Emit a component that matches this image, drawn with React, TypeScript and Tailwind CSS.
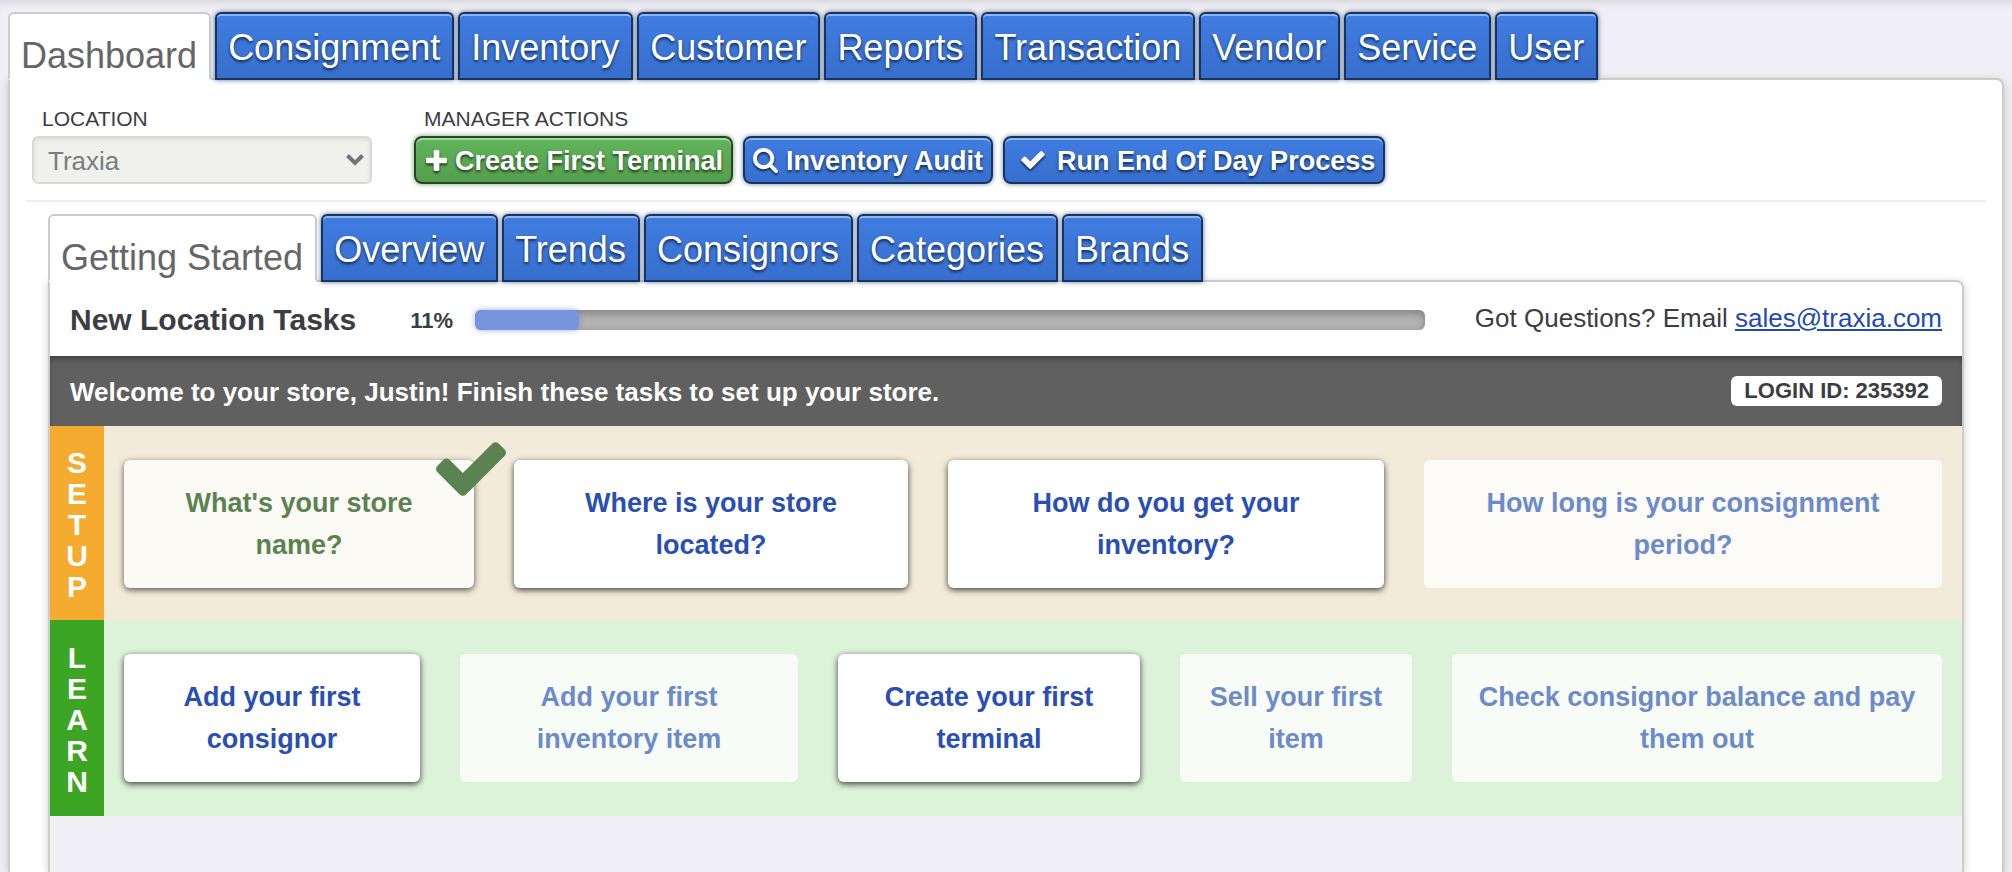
import { useState } from "react";
import clsx from "clsx";

type TaskStatus = "done" | "open" | "locked";

interface Task {
  title: string;
  status: TaskStatus;
}

const MAIN_TABS = [
  "Dashboard",
  "Consignment",
  "Inventory",
  "Customer",
  "Reports",
  "Transaction",
  "Vendor",
  "Service",
  "User",
];

const REPORT_TABS = [
  "Getting Started",
  "Overview",
  "Trends",
  "Consignors",
  "Categories",
  "Brands",
];

const SETUP_TASKS: Task[] = [
  { title: "What's your store name?", status: "done" },
  { title: "Where is your store located?", status: "open" },
  { title: "How do you get your inventory?", status: "open" },
  { title: "How long is your consignment period?", status: "locked" },
];

const LEARN_TASKS: Task[] = [
  { title: "Add your first consignor", status: "open" },
  { title: "Add your first inventory item", status: "locked" },
  { title: "Create your first terminal", status: "open" },
  { title: "Sell your first item", status: "locked" },
  { title: "Check consignor balance and pay them out", status: "locked" },
];

const PROGRESS = 11;

function CheckIcon({ className }: { className?: string }) {
  return (
    <svg viewBox="121 334 1550 1188" fill="currentColor" aria-hidden="true" className={className}>
      <path d="M1671 566q0 40-28 68l-724 724-136 136q-28 28-68 28t-68-28l-136-136-362-362q-28-28-28-68t28-68l136-136q28-28 68-28t68 28l294 295 656-657q28-28 68-28t68 28l136 136q28 28 28 68z" />
    </svg>
  );
}

function PlusIcon({ className }: { className?: string }) {
  return (
    <svg viewBox="192 128 1408 1408" fill="currentColor" aria-hidden="true" className={className}>
      <path d="M1600 736v192q0 40-28 68t-68 28h-416v416q0 40-28 68t-68 28h-192q-40 0-68-28t-28-68v-416h-416q-40 0-68-28t-28-68v-192q0-40 28-68t68-28h416v-416q0-40 28-68t68-28h192q40 0 68 28t28 68v416h416q40 0 68 28t28 68z" />
    </svg>
  );
}

function SearchIcon({ className }: { className?: string }) {
  return (
    <svg viewBox="64 128 1664 1664" fill="currentColor" aria-hidden="true" className={className}>
      <path d="M1216 832q0-185-131.5-316.5t-316.5-131.5-316.5 131.5-131.5 316.5 131.5 316.5 316.5 131.5 316.5-131.5 131.5-316.5zm512 832q0 52-38 90t-90 38q-54 0-90-38l-343-342q-179 124-399 124-143 0-273.5-55.5t-225-150-150-225-55.5-273.5 55.5-273.5 150-225 225-150 273.5-55.5 273.5 55.5 225 150 150 225 55.5 273.5q0 220-124 399l343 343q37 37 37 90z" />
    </svg>
  );
}

function TabBar({ tabs, label }: { tabs: string[]; label: string }) {
  const [active, setActive] = useState(tabs[0]);

  return (
    <div role="tablist" aria-label={label} className="relative z-10 -mb-0.5 flex gap-1">
      {tabs.map((tab) => (
        <button
          key={tab}
          type="button"
          role="tab"
          aria-selected={tab === active}
          onClick={() => setActive(tab)}
          className={clsx(
            "h-[68px] whitespace-nowrap rounded-t-md border-2 pr-3 pl-[11px] text-4xl",
            tab === active
              ? "border-[#cccccc] border-b-white bg-white pt-5 text-[#666666]"
              : "border-[#17335f] bg-linear-to-b from-[#407ce1] to-[#386fcd] pt-1 text-white shadow-[inset_0_2px_0_#8db6f2,0_0_5px_rgba(23,51,95,0.7)] text-shadow-[0_2px_3px_#12294f]"
          )}
        >
          {tab}
        </button>
      ))}
    </div>
  );
}

const ACTION_BASE =
  "flex h-12 items-center whitespace-nowrap rounded-lg border-2 text-[27px] leading-8 font-bold text-white";
const ACTION_BLUE =
  "border-[#17335f] bg-linear-to-b from-[#407ce1] to-[#386fcd] shadow-[inset_0_2px_0_#8db6f2,0_0_5px_rgba(23,51,95,0.6)] text-shadow-[0_2px_3px_#12294f]";
const ACTION_GREEN =
  "border-[#23471f] bg-linear-to-b from-[#61b45a] to-[#559e4e] shadow-[inset_0_2px_0_#a5d8a0,0_0_5px_rgba(35,71,31,0.6)] text-shadow-[0_2px_3px_#1d3b1a]";

function TaskCard({ task }: { task: Task }) {
  return (
    <button
      type="button"
      disabled={task.status === "locked"}
      className={clsx(
        "relative rounded-md px-6 py-[22px] text-center text-[27px] leading-[42px] font-bold",
        task.status === "done" &&
          "bg-[#fcfaf5] text-[#5b8352] shadow-[0_2px_6px_rgba(0,0,0,0.65)]",
        task.status === "open" && "bg-white text-[#2a4fb4] shadow-[0_2px_6px_rgba(0,0,0,0.75)]",
        task.status === "locked" && "bg-white/80 text-[#6d8bc8]"
      )}
    >
      {task.title}
      {task.status === "done" && (
        <CheckIcon className="absolute -top-[18px] -right-8 h-[54px] w-[70px]" />
      )}
    </button>
  );
}

function RowLabel({ text, className }: { text: string; className: string }) {
  return (
    <h3
      aria-label={text}
      className={clsx(
        "flex w-[54px] shrink-0 flex-col items-center justify-center pt-0.5 text-[30px] leading-[31px] font-bold text-white",
        className
      )}
    >
      {text.split("").map((letter, i) => (
        <span key={i}>{letter}</span>
      ))}
    </h3>
  );
}

export default function App() {
  const [location, setLocation] = useState("Traxia");

  return (
    <div className="flex min-h-screen flex-col bg-[#f0eff5] px-2 pt-3 font-['Liberation_Sans',Arial,sans-serif] text-[#3b3d42] shadow-[inset_0_8px_8px_-6px_rgba(0,0,0,0.12)]">
      <TabBar tabs={MAIN_TABS} label="Main" />

      <main className="flex flex-1 flex-col rounded-tr-lg border-2 border-b-0 border-[#cccccc] bg-white px-4 shadow-[0_2px_8px_rgba(0,0,0,0.2)]">
        <div className="flex gap-[42px] border-b-2 border-[#f0eff5] px-1.5 pt-6 pb-4">
          <div className="w-[340px]">
            <label htmlFor="location" className="mb-0.5 block pl-2.5 text-[21px] leading-[30px]">
              LOCATION
            </label>
            <div className="relative">
              <select
                id="location"
                disabled
                value={location}
                onChange={(e) => setLocation(e.target.value)}
                className="h-12 w-full appearance-none rounded-md border-2 border-[#d9d9d9] bg-[#f0f1ec] pt-0.5 pr-10 pl-3.5 text-[26px] leading-8 text-[#7a7c7f] opacity-100 shadow-[inset_0_2px_4px_rgba(0,0,0,0.08)]"
              >
                <option>Traxia</option>
              </select>
              <svg
                viewBox="0 0 18 12"
                fill="none"
                stroke="#727479"
                strokeWidth="4"
                aria-hidden="true"
                className="pointer-events-none absolute top-[18px] right-2 h-3 w-[18px]"
              >
                <path d="M1.5 1.5 9 9l7.5-7.5" />
              </svg>
            </div>
          </div>

          <div>
            <h2 className="mb-0.5 pl-2.5 text-[21px] leading-[30px]">MANAGER ACTIONS</h2>
            <div className="flex gap-2.5">
              <button type="button" className={clsx(ACTION_BASE, ACTION_GREEN, "gap-2 pr-2 pl-2.5")}>
                <PlusIcon className="size-[21px] drop-shadow-[0_2px_1px_#1d3b1a]" />
                <span className="pt-0.5">Create First Terminal</span>
              </button>
              <button type="button" className={clsx(ACTION_BASE, ACTION_BLUE, "gap-2 px-2")}>
                <SearchIcon className="size-[25px] drop-shadow-[0_2px_1px_#12294f]" />
                <span className="pt-0.5">Inventory Audit</span>
              </button>
              <button type="button" className={clsx(ACTION_BASE, ACTION_BLUE, "gap-3 pr-2 pl-4")}>
                <CheckIcon className="h-[18px] w-6 drop-shadow-[0_2px_1px_#12294f]" />
                <span className="pt-0.5">Run End Of Day Process</span>
              </button>
            </div>
          </div>
        </div>

        <div className="flex flex-1 flex-col px-[22px] pt-3">
          <TabBar tabs={REPORT_TABS} label="Dashboard" />

          <section className="flex-1 rounded-tr-lg border-2 border-b-0 border-[#cccccc] bg-[#f0eff5] shadow-[0_2px_8px_rgba(0,0,0,0.2)]">
            <header className="flex h-[74px] items-center rounded-tr-md bg-white px-5 pt-0.5">
              <h2 className="text-3xl font-bold">New Location Tasks</h2>
              <span className="ml-[54px] text-[22px] font-bold">{PROGRESS}%</span>
              <div
                role="progressbar"
                aria-label="New Location Tasks"
                aria-valuenow={PROGRESS}
                aria-valuemin={0}
                aria-valuemax={100}
                className="ml-[22px] h-5 flex-1 rounded-md bg-[#b3b3b3] shadow-[inset_0_3px_8px_rgba(0,0,0,0.3)]"
              >
                <div
                  className="h-full rounded-md bg-[#7894dd] shadow-[0_0_6px_rgba(90,125,225,0.6)]"
                  style={{ width: `${PROGRESS}%` }}
                />
              </div>
              <p className="ml-[50px] pb-1 text-[26px]">
                Got Questions? Email{" "}
                <a
                  href="mailto:sales@traxia.com"
                  className="text-[#2149b5] underline decoration-2 underline-offset-2"
                >
                  sales@traxia.com
                </a>
              </p>
            </header>

            <div className="flex h-[70px] items-center justify-between bg-[#606060] px-5 shadow-[inset_0_4px_6px_-2px_rgba(0,0,0,0.4)]">
              <p className="pt-0.5 text-[26px] font-bold text-white">
                Welcome to your store, Justin! Finish these tasks to set up your store.
              </p>
              <span className="rounded-md bg-white px-[13px] text-[22px] leading-[30px] font-bold">
                LOGIN ID: 235392
              </span>
            </div>

            <div className="flex bg-[#f3ebd9]">
              <RowLabel text="SETUP" className="bg-[#f5ab2f]" />
              <div className="grid flex-1 grid-cols-[350fr_394fr_436fr_518fr] gap-10 px-5 pt-[34px] pb-8">
                {SETUP_TASKS.map((task) => (
                  <TaskCard key={task.title} task={task} />
                ))}
              </div>
            </div>

            <div className="flex bg-[#dcf2d9]">
              <RowLabel text="LEARN" className="bg-[#3da524]" />
              <div className="grid flex-1 grid-cols-[296fr_338fr_302fr_232fr_490fr] gap-10 px-5 py-[34px]">
                {LEARN_TASKS.map((task) => (
                  <TaskCard key={task.title} task={task} />
                ))}
              </div>
            </div>
          </section>
        </div>
      </main>
    </div>
  );
}
